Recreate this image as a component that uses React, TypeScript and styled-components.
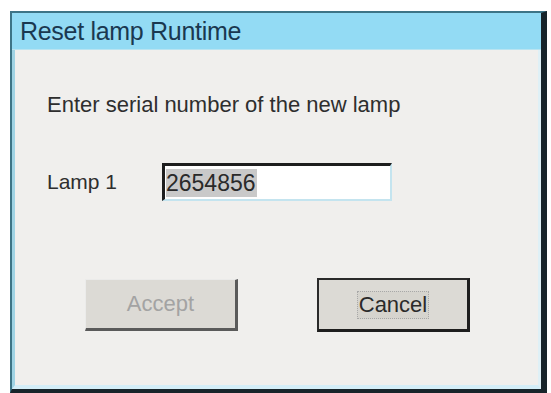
import React from "react";
import styled, { createGlobalStyle } from "styled-components";

const Global = createGlobalStyle`
  html, body { margin: 0; padding: 0; background: #ffffff; }
  body { font-family: "Liberation Sans", Arial, sans-serif; }
`;

const Page = styled.div`
  width: 551px;
  height: 393px;
  padding: 11px 0 0 10px;
  box-sizing: border-box;
  overflow: hidden;
`;

const Window = styled.div`
  width: 537px;
  height: 382px;
  box-sizing: border-box;
  display: flex;
  flex-direction: column;
  border-top: 2px solid #3d7486;
  border-left: 2px solid #3d7486;
  border-right: 6px solid #17242a;
  border-bottom: 4px solid #17242a;
  background: #f0efed;
`;

const TitleBar = styled.div`
  height: 36px;
  flex: none;
  display: flex;
  align-items: center;
  padding-left: 8px;
  background: #93dbf4;
  border-bottom: 1px solid #b9e4f1;
  color: #1a3850;
  font-size: 25px;
  letter-spacing: -0.3px;
`;

const Body = styled.div`
  flex: 1;
  display: flex;
  flex-direction: column;
  border-left: 3px solid #9fd3e4;
  border-right: 3px solid #dff0f6;
  border-bottom: 4px solid #d4eef8;
  padding: 0 0 0 32px;
`;

const Prompt = styled.div`
  margin-top: 42px;
  font-size: 22px;
  color: #2e2e2e;
  height: 26px;
  line-height: 26px;
`;

const Row = styled.div`
  margin-top: 45px;
  display: flex;
  align-items: center;
`;

const Label = styled.div`
  width: 115px;
  font-size: 21px;
  color: #2e2e2e;
`;

const Field = styled.div`
  width: 230px;
  height: 38px;
  box-sizing: border-box;
  background: #ffffff;
  border-top: 3px solid #1e1e1e;
  border-left: 3px solid #1e1e1e;
  border-right: 2px solid #c4e4ef;
  border-bottom: 2px solid #c4e4ef;
  display: flex;
  align-items: center;
  padding-left: 1px;
`;

const Selected = styled.span`
  background: #c9c9c9;
  color: #2a2a2a;
  font-size: 23px;
  line-height: 28px;
  padding: 0 1px 0 0;
`;

const Buttons = styled.div`
  margin-top: 77px;
  display: flex;
  padding-left: 38px;
  gap: 79px;
`;

const Button = styled.div<{ $disabled?: boolean }>`
  width: 153px;
  height: ${(p) => (p.$disabled ? "52px" : "54px")};
  margin-top: ${(p) => (p.$disabled ? "1px" : "0")};
  box-sizing: border-box;
  display: flex;
  align-items: center;
  justify-content: center;
  background: #dcdad5;
  font-size: 22px;
  color: ${(p) => (p.$disabled ? "#a3a3a3" : "#2a2a2a")};
  border-top: ${(p) => (p.$disabled ? "1px solid #ebebea" : "2px solid #2a2a2a")};
  border-left: ${(p) => (p.$disabled ? "1px solid #ebebea" : "2px solid #2a2a2a")};
  border-right: 3px solid ${(p) => (p.$disabled ? "#5a5a5a" : "#1e1e1e")};
  border-bottom: 3px solid ${(p) => (p.$disabled ? "#5a5a5a" : "#1e1e1e")};
`;

const Focus = styled.span`
  padding: 0 1px;
  border: 1px dotted #a8a8a8;
  background: #d6d4ce;
  line-height: 26px;
`;

export default function App() {
  return (
    <>
      <Global />
      <Page>
        <Window>
          <TitleBar>Reset lamp Runtime</TitleBar>
          <Body>
            <Prompt>Enter serial number of the new lamp</Prompt>
            <Row>
              <Label>Lamp 1</Label>
              <Field>
                <Selected>2654856</Selected>
              </Field>
            </Row>
            <Buttons>
              <Button $disabled>Accept</Button>
              <Button>
                <Focus>Cancel</Focus>
              </Button>
            </Buttons>
          </Body>
        </Window>
      </Page>
    </>
  );
}
